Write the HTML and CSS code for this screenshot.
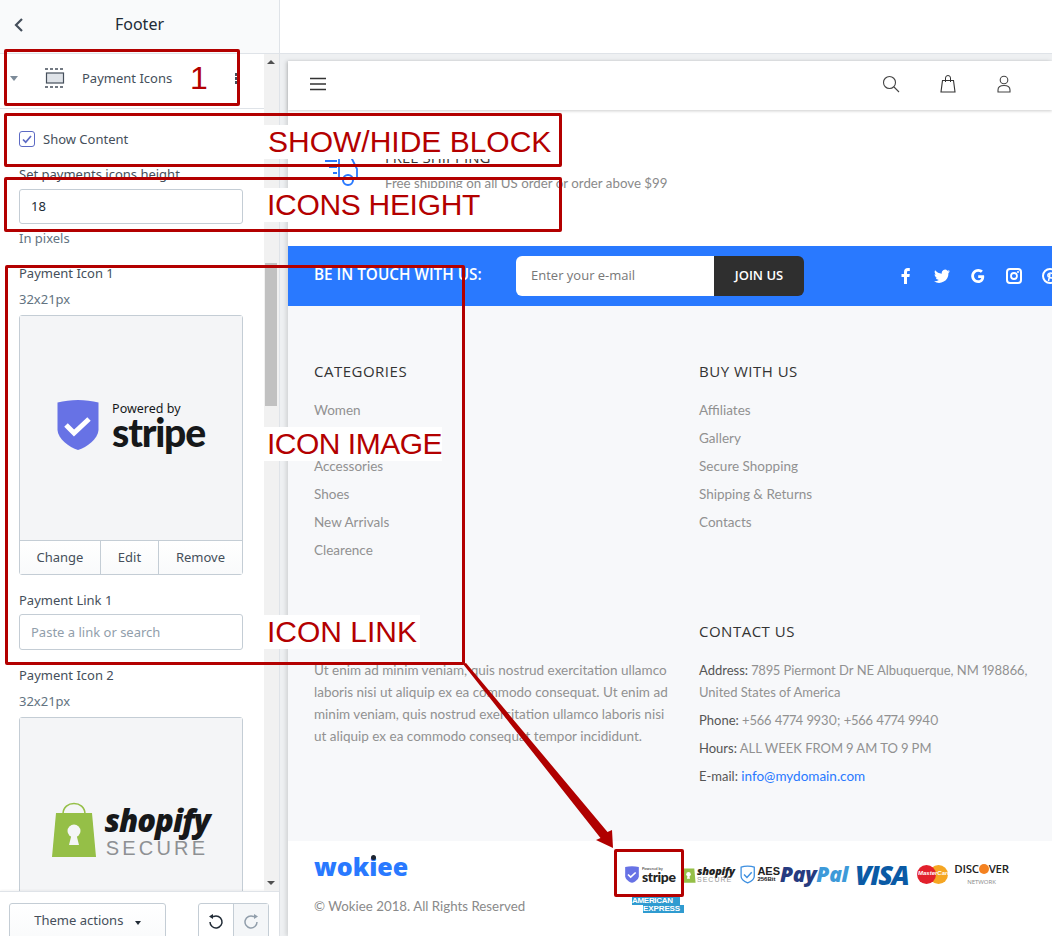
FILE: index.html
```html
<!DOCTYPE html>
<html lang="en">
<head>
    <meta charset="utf-8">
    <title>Footer - Payment Icons</title>
    <link rel="stylesheet" href="styles.css">
</head>
<body>
    <div class="app">
        <aside class="sidebar">
            <div class="side-top">
                <svg class="back" width="10" height="16" viewBox="0 0 10 16"><path d="M8 2L2 8l6 6" fill="none" stroke="#454f5b" stroke-width="2.2"/></svg>
                <span>Footer</span>
            </div>
            <div class="side-body">
                <div class="side-scroll">
                    <div class="block-row">
                        <span class="caret"></span>
                        <svg class="block-icon" width="22" height="22" viewBox="0 0 22 22">
                            <rect x="2.500" y="6" width="17" height="10" fill="#dfe3e8" stroke="#454f5b" stroke-width="1.200"/>
                            <path d="M1 2h20M1 20h20" stroke="#454f5b" stroke-width="1.600" stroke-dasharray="3 2" fill="none"/>
                        </svg>
                        <span class="block-name">Payment Icons</span>
                        <span class="dots"><i></i><i></i><i></i></span>
                    </div>
                    <div class="settings">
                        <label class="check-row">
                            <span class="check"><svg width="12" height="12" viewBox="0 0 12 12"><path d="M2 6.500l2.700 2.700L10 3" fill="none" stroke="#5c6ac4" stroke-width="1.700"/></svg></span>
                            Show Content
                        </label>
                        <div class="label label-height">Set payments icons height</div>
                        <div class="input">18</div>
                        <div class="hint hint-pixels">In pixels</div>
                        <div class="label label-icon">Payment Icon 1</div>
                        <div class="hint hint-size">32x21px</div>
                        <div class="picker">
                            <div class="picker-img stripe-img">
                                <svg width="42" height="50" viewBox="0 0 42 50"><path d="M21 0c7 0 14 1 20.500 2.500V30C41 39 30 47 21 50 12 47 1 39 .5 30V2.500C7 1 14 0 21 0z" fill="#6772e5"/><path d="M9 25l8 8 15-14" fill="none" stroke="#fff" stroke-width="5"/></svg>
                                <div class="stripe-text">
                                    <span class="stripe-small">Powered by</span>
                                    <span class="stripe-big">stripe</span>
                                </div>
                            </div>
                            <div class="picker-btns">
                                <span class="btn-change">Change</span>
                                <span class="btn-edit">Edit</span>
                                <span class="btn-remove">Remove</span>
                            </div>
                        </div>
                        <div class="label label-link">Payment Link 1</div>
                        <div class="input input-empty">Paste a link or search</div>
                        <div class="label label-icon2">Payment Icon 2</div>
                        <div class="hint hint-size">32x21px</div>
                        <div class="picker picker-cut">
                            <div class="picker-img shopify-img">
                                <svg width="44" height="56" viewBox="0 0 44 56"><path d="M11 12C11 -2 33 -2 33 12" fill="none" stroke="#95bf47" stroke-width="1.600"/><path d="M4 11h36l4 44H0z" fill="#95bf47"/><circle cx="22" cy="29" r="6.500" fill="#f4f5f7"/><path d="M20 31h4l3 12H17z" fill="#f4f5f7"/></svg>
                                <div class="shopify-text">
                                    <span class="shopify-big">shopify</span>
                                    <span class="shopify-small">SECURE</span>
                                </div>
                            </div>
                        </div>
                    </div>
                </div>
                <div class="scrollbar">
                    <span class="arrow-up"></span>
                    <span class="thumb"></span>
                    <span class="arrow-down"></span>
                </div>
            </div>
            <div class="side-bottom">
                <div class="theme-btn">Theme actions <span class="caret-small"></span></div>
                <div class="undo-group">
                    <span class="undo"><svg width="18" height="18" viewBox="0 0 18 18"><path d="M5 3.500h1.500A6 6 0 1 1 3 9" fill="none" stroke="#212b36" stroke-width="1.500"/><path d="M2 3.500L6 1v5z" fill="#212b36"/></svg></span>
                    <span class="redo"><svg width="18" height="18" viewBox="0 0 18 18"><path d="M13 3.500h-1.500A6 6 0 1 0 15 9" fill="none" stroke="#919eab" stroke-width="1.500"/><path d="M16 3.500L12 1v5z" fill="#919eab"/></svg></span>
                </div>
            </div>
        </aside>

        <main class="main">
            <div class="main-top"></div>
            <div class="canvas">
                <div class="page">
                    <header class="shop-head">
                        <svg width="18" height="14" viewBox="0 0 18 14"><path d="M1 1.500h16M1 7h16M1 12.500h16" stroke="#333" stroke-width="1.300"/></svg>
                        <div class="shop-icons">
                            <svg width="18" height="18" viewBox="0 0 18 18"><circle cx="7.500" cy="7.500" r="6" fill="none" stroke="#444" stroke-width="1.100"/><path d="M12 12l5 5" stroke="#444" stroke-width="1.100"/></svg>
                            <svg width="16" height="18" viewBox="0 0 16 18"><path d="M2.500 5.500h11l1.500 11.500H1z" fill="none" stroke="#333" stroke-width="1.100"/><path d="M5.500 7V3a2.500 2.500 0 0 1 5 0v4" fill="none" stroke="#333" stroke-width="1"/></svg>
                            <svg width="16" height="18" viewBox="0 0 16 18"><circle cx="8" cy="5" r="3.800" fill="none" stroke="#444" stroke-width="1.100"/><path d="M2 17v-2c0-3 2-4.500 6-4.500s6 1.500 6 4.500v2z" fill="none" stroke="#444" stroke-width="1.100"/></svg>
                        </div>
                    </header>

                    <section class="shipping">
                        <svg class="truck" width="36" height="32" viewBox="0 0 36 32"><path d="M1 6h12M5 12h8M9 18h4" stroke="#2979ff" stroke-width="2"/><path d="M15 2h12l6 12v10h-4M15 2v22h5" fill="none" stroke="#2979ff" stroke-width="1.800"/><circle cx="24" cy="25" r="5" fill="none" stroke="#2979ff" stroke-width="2"/></svg>
                        <div>
                            <div class="ship-title">FREE SHIPPING</div>
                            <div class="ship-text">Free shipping on all US order or order above $99</div>
                        </div>
                    </section>

                    <section class="touch">
                        <div class="touch-title">BE IN TOUCH WITH US:</div>
                        <div class="touch-form">
                            <span class="touch-input">Enter your e-mail</span>
                            <span class="touch-btn">JOIN US</span>
                        </div>
                        <div class="socials">
                            <svg width="16" height="16" viewBox="0 0 16 16"><path d="M6 16V9H3.500V6H6V4c0-2.600 1.500-4 3.800-4h2v3h-1.400C9.400 3 9 3.500 9 4.400V6h2.800l-.4 3H9v7z" fill="#fff"/></svg>
                            <svg width="16" height="16" viewBox="0 0 16 16"><path d="M16 3.200c-.6.300-1.200.4-1.900.5.700-.4 1.200-1 1.400-1.800-.6.400-1.300.6-2.100.8A3.300 3.300 0 0 0 7.800 5.700C5.100 5.600 2.700 4.300 1.100 2.300c-.9 1.500-.4 3.400 1 4.400-.5 0-1-.2-1.500-.4 0 1.600 1.100 3 2.600 3.300-.5.100-1 .1-1.500 0 .4 1.300 1.600 2.300 3.100 2.300A6.600 6.600 0 0 1 0 13.300 9.300 9.300 0 0 0 14.400 5c.6-.5 1.200-1.100 1.600-1.800z" fill="#fff"/></svg>
                            <svg width="16" height="16" viewBox="0 0 16 16"><path d="M14 7.300H8.200v2.600h3.100c-.4 1.500-1.600 2.300-3.100 2.300a4.200 4.200 0 0 1 0-8.400c1 0 2 .4 2.700 1l2-2A7 7 0 1 0 8.200 15c3.700 0 6-2.600 6-6.300 0-.5 0-1-.2-1.400z" fill="#fff"/></svg>
                            <svg width="16" height="16" viewBox="0 0 16 16"><rect x="1" y="1" width="14" height="14" rx="3" fill="none" stroke="#fff" stroke-width="2"/><circle cx="8" cy="8" r="3" fill="none" stroke="#fff" stroke-width="1.800"/><circle cx="12" cy="4" r="1" fill="#fff"/></svg>
                            <svg width="16" height="16" viewBox="0 0 16 16"><circle cx="8" cy="8" r="7" fill="none" stroke="#fff" stroke-width="2"/><path d="M6.500 13L8 6m-1.500 3c-1.500-2 0-4 2-4 2.500 0 3 2 2.500 3.500S8.500 11 8 9" fill="none" stroke="#fff" stroke-width="1.500"/></svg>
                        </div>
                    </section>

                    <section class="links">
                        <div class="col">
                            <h4>CATEGORIES</h4>
                            <ul>
                                <li>Women</li>
                                <li>Men</li>
                                <li>Accessories</li>
                                <li>Shoes</li>
                                <li>New Arrivals</li>
                                <li>Clearence</li>
                            </ul>
                        </div>
                        <div class="col">
                            <h4>BUY WITH US</h4>
                            <ul>
                                <li>Affiliates</li>
                                <li>Gallery</li>
                                <li>Secure Shopping</li>
                                <li>Shipping &amp; Returns</li>
                                <li>Contacts</li>
                            </ul>
                        </div>
                        <div class="col">
                            <h4>ABOUT</h4>
                            <p class="about">Ut enim ad minim veniam, quis nostrud exercitation ullamco laboris nisi ut aliquip ex ea commodo consequat. Ut enim ad minim veniam, quis nostrud exercitation ullamco laboris nisi ut aliquip ex ea commodo consequat tempor incididunt.</p>
                        </div>
                        <div class="col contact">
                            <h4>CONTACT US</h4>
                            <p><b>Address:</b> 7895 Piermont Dr NE Albuquerque, NM 198866, United States of America</p>
                            <p><b>Phone:</b> +566 4774 9930; +566 4774 9940</p>
                            <p><b>Hours:</b> ALL WEEK FROM 9 AM TO 9 PM</p>
                            <p><b>E-mail:</b> <span class="mail">info@mydomain.com</span></p>
                        </div>
                    </section>

                    <footer class="bottom">
                        <div class="brand">
                            <div class="logo">wok<span class="logo-i">i</span>ee</div>
                            <div class="copy">© Wokiee 2018. All Rights Reserved</div>
                        </div>
                        <div class="pay">
                            <span class="pay-stripe">
                                <svg width="14" height="17" viewBox="0 0 42 50"><path d="M21 0c7 0 14 1 20.500 2.500V30C41 39 30 47 21 50 12 47 1 39 .5 30V2.500C7 1 14 0 21 0z" fill="#6772e5"/><path d="M9 25l8 8 15-14" fill="none" stroke="#fff" stroke-width="5"/></svg>
                                <span class="mini-stripe"><small>Powered by</small>stripe</span>
                            </span>
                            <span class="pay-shopify">
                                <svg width="15" height="18" viewBox="0 0 44 56"><path d="M4 11h36l4 44H0z" fill="#95bf47"/><circle cx="22" cy="29" r="7" fill="#fff"/><path d="M20 31h4l3 12H17z" fill="#fff"/></svg>
                                <span class="mini-shopify">shopify<small>SECURE</small></span>
                            </span>
                            <span class="pay-aes">
                                <svg width="16" height="19" viewBox="0 0 42 50"><path d="M21 2c7 0 13 1 18 3v25C39 38 29 45 21 48 13 45 3 38 3 30V5c5-2 11-3 18-3z" fill="none" stroke="#3d8fe0" stroke-width="3.500"/><path d="M11 25l8 8 13-14" fill="none" stroke="#3d8fe0" stroke-width="4"/></svg>
                                <span class="mini-aes">AES<small>256Bit</small></span>
                            </span>
                            <span class="pay-paypal"><b>Pay</b><i>Pal</i></span>
                            <span class="pay-visa">VISA</span>
                            <span class="pay-mc">
                                <svg width="31" height="19" viewBox="0 0 31 19"><circle cx="21.500" cy="9.500" r="9.500" fill="#f5a623"/><circle cx="9.500" cy="9.500" r="9.500" fill="#e2202c"/></svg>
                                <span class="mc-label">MasterCard</span>
                            </span>
                            <span class="pay-discover">DISC<span class="disc-o"></span>VER<small>NETWORK</small></span>
                            <span class="pay-amex"><span class="amex-1">AMERICAN</span><span class="amex-2">EXPRESS</span></span>
                        </div>
                    </footer>
                </div>
            </div>
        </main>
    </div>

    <!-- red notes laid over the screenshot -->
    <div class="note-box box-1"></div>
    <div class="note-box box-2"></div>
    <div class="note-box box-3"></div>
    <div class="note-box box-4"></div>
    <div class="note-box box-5"></div>
    <span class="note note-1">1</span>
    <span class="note note-show">SHOW/HIDE BLOCK</span>
    <span class="note note-height">ICONS HEIGHT</span>
    <span class="note note-image">ICON IMAGE</span>
    <span class="note note-link">ICON LINK</span>
    <svg class="note-arrow" width="160" height="195" viewBox="0 0 160 195">
        <path d="M0 1L3 0 144.500 169 149 167 150 185 133 177 137.500 175z" fill="#b00000"/>
    </svg>
</body>
</html>
```

FILE: styles.css
```css
* {
    box-sizing: border-box;
}

html, body {
    margin: 0;
    height: 936px;
    overflow: hidden;
}

body {
    position: relative;
    font-family: "Noto Sans", sans-serif;
    font-size: 13px;
    color: #454f5b;
    background-color: #fff;
}

.app {
    display: flex;
    width: 1052px;
    height: 936px;
}

/* left panel */
.sidebar {
    width: 280px;
    flex: none;
    display: flex;
    flex-direction: column;
    border-right: 1px solid #dfe3e8;
}

.side-top {
    height: 54px;
    flex: none;
    display: flex;
    align-items: center;
    justify-content: center;
    position: relative;
    padding-bottom: 5px;
    background-color: #f9fafb;
    border-bottom: 1px solid #dfe3e8;
    font-size: 16px;
    color: #212b36;
}

.back {
    position: absolute;
    left: 14px;
    top: 17px;
}

.side-body {
    flex: 1;
    min-height: 0;
    display: flex;
}

.side-scroll {
    flex: 1;
    min-width: 0;
    overflow: hidden;
}

.block-row {
    height: 55px;
    display: flex;
    align-items: center;
    position: relative;
    padding: 0 0 6px 10px;
    border-bottom: 1px solid #dfe3e8;
}

.caret {
    width: 0;
    height: 0;
    border-left: 4px solid transparent;
    border-right: 4px solid transparent;
    border-top: 5px solid #7d8b99;
}

.block-icon {
    margin-left: 26px;
}

.block-name {
    margin-left: 16px;
    font-size: 13px;
}

.dots {
    display: flex;
    flex-direction: column;
    gap: 1px;
    margin-left: 63px;
}

.dots i {
    width: 4px;
    height: 3px;
    background-color: #454f5b;
}

.settings {
    padding: 0 21px 0 19px;
}

.check-row {
    display: flex;
    align-items: center;
    gap: 8px;
    height: 20px;
    margin-top: 20px;
    color: #454f5b;
}

.check {
    width: 16px;
    height: 16px;
    display: flex;
    align-items: center;
    justify-content: center;
    border: 1px solid #5c6ac4;
    border-radius: 3px;
}

.label {
    height: 18px;
    line-height: 18px;
    color: #454f5b;
}

.label-height { margin-top: 16px; }
.label-icon { margin-top: 17px; }
.label-link { margin-top: 16px; }
.label-icon2 { margin-top: 16px; }

.hint {
    height: 18px;
    line-height: 18px;
    color: #637381;
}

.hint-pixels { margin-top: 5px; }
.hint-size { margin-top: 8px; }

.input {
    height: 35px;
    margin-top: 6px;
    padding: 0 11px;
    line-height: 33px;
    background-color: #fff;
    border: 1px solid #c4cdd5;
    border-radius: 3px;
    color: #212b36;
}

.input-empty {
    height: 36px;
    margin-top: 5px;
    line-height: 34px;
    color: #919eab;
}

.picker {
    margin-top: 7px;
    border: 1px solid #c4cdd5;
    border-radius: 3px;
}

.picker-cut {
    height: 200px;
}

.picker-img {
    height: 224px;
    display: flex;
    align-items: center;
    justify-content: center;
    gap: 13px;
    background-color: #f4f5f7;
}

.stripe-img {
    padding-bottom: 6px;
}

.shopify-img {
    gap: 8px;
}

.stripe-text {
    display: flex;
    flex-direction: column;
    color: #16181a;
}

.stripe-small {
    font-size: 12.5px;
    line-height: 14px;
}

.stripe-big {
    font-family: "Lato", sans-serif;
    font-weight: 900;
    font-size: 39px;
    line-height: 32px;
    letter-spacing: -1.2px;
}

.shopify-text {
    display: flex;
    flex-direction: column;
    align-items: center;
}

.shopify-big {
    font-family: "Open Sans", sans-serif;
    font-weight: 800;
    font-style: italic;
    font-size: 31px;
    line-height: 36px;
    letter-spacing: -1px;
    color: #16181a;
}

.shopify-small {
    font-family: "Liberation Sans", sans-serif;
    font-size: 20px;
    line-height: 20px;
    letter-spacing: 3.2px;
    color: #8e9093;
}

.picker-btns {
    display: flex;
    height: 34px;
    line-height: 33px;
    text-align: center;
    background: linear-gradient(#fff, #f9fafb);
    border-top: 1px solid #c4cdd5;
}

.picker-btns span + span {
    border-left: 1px solid #c4cdd5;
}

.btn-change { width: 80px; }
.btn-edit { width: 58px; }
.btn-remove { flex: 1; }

.scrollbar {
    width: 15px;
    flex: none;
    position: relative;
    background-color: #f1f1f1;
}

.arrow-up,
.arrow-down {
    position: absolute;
    left: 3px;
    width: 0;
    height: 0;
    border-left: 4px solid transparent;
    border-right: 4px solid transparent;
}

.arrow-up {
    top: 6px;
    border-bottom: 4px solid #505050;
}

.arrow-down {
    bottom: 6px;
    border-top: 4px solid #505050;
}

.thumb {
    display: block;
    width: 12px;
    height: 143px;
    margin: 209px 0 0 1px;
    background-color: #c1c1c1;
}

.side-bottom {
    height: 45px;
    flex: none;
    display: flex;
    justify-content: space-between;
    padding: 11px 10px 0 9px;
    background-color: #fff;
    border-top: 1px solid #dfe3e8;
    box-shadow: 0 -1px 2px rgba(0, 0, 0, 0.05);
}

.theme-btn {
    width: 157px;
    height: 40px;
    line-height: 33px;
    text-align: center;
    background: linear-gradient(#fff, #f9fafb);
    border: 1px solid #c4cdd5;
    border-radius: 3px;
}

.caret-small {
    display: inline-block;
    width: 0;
    height: 0;
    margin-left: 8px;
    vertical-align: 0;
    border-left: 3px solid transparent;
    border-right: 3px solid transparent;
    border-top: 4px solid #212b36;
}

.undo-group {
    display: flex;
    width: 71px;
    height: 40px;
    border: 1px solid #c4cdd5;
    border-radius: 3px;
}

.undo,
.redo {
    flex: 1;
    display: flex;
    justify-content: center;
    padding-top: 9px;
}

.redo {
    background-color: #f4f6f8;
    border-left: 1px solid #c4cdd5;
}

/* preview */
.main {
    flex: 1;
    min-width: 0;
    display: flex;
    flex-direction: column;
}

.main-top {
    height: 54px;
    flex: none;
    background-color: #fff;
    border-bottom: 1px solid #dfe3e8;
}

.canvas {
    flex: 1;
    min-height: 0;
    overflow: hidden;
    padding: 7px 0 0 8px;
    background-color: #eef0f2;
}

.page {
    width: 764px;
    height: 875px;
    background-color: #fff;
    box-shadow: -2px 0 4px rgba(0, 0, 0, 0.12);
    font-family: "Lato", sans-serif;
}

.shop-head {
    height: 49px;
    display: flex;
    align-items: center;
    justify-content: space-between;
    padding: 0 40px 3px 21px;
    background-color: #fff;
    box-shadow: 0 1px 3px rgba(0, 0, 0, 0.2);
    position: relative;
}

.shop-icons {
    display: flex;
    gap: 40px;
}

.shipping {
    height: 136px;
    display: flex;
    gap: 25px;
    padding: 37px 0 0 36px;
}

.truck {
    margin-top: 8px;
}

.ship-title {
    font-family: "Open Sans", sans-serif;
    font-size: 15px;
    color: #333;
    height: 20px;
}

.ship-text {
    margin-top: 8px;
    font-size: 13.3px;
    color: #8a8a8a;
}

.touch {
    height: 60px;
    display: flex;
    align-items: center;
    padding-left: 26px;
    background-color: #2979ff;
    color: #fff;
}

.touch-title {
    width: 202px;
    flex: none;
    padding-bottom: 4px;
    font-family: "Open Sans", sans-serif;
    font-weight: 600;
    font-size: 15.300px;
    white-space: nowrap;
}

.touch-form {
    display: flex;
    width: 288px;
    height: 40px;
    flex: none;
    border-radius: 6px;
    overflow: hidden;
}

.touch-input {
    flex: 1;
    padding-left: 15px;
    line-height: 39px;
    font-family: "Open Sans", sans-serif;
    font-size: 13px;
    color: #777;
    background-color: #fff;
}

.touch-btn {
    width: 90px;
    line-height: 39px;
    text-align: center;
    font-family: "Open Sans", sans-serif;
    font-weight: 600;
    font-size: 13px;
    background-color: #2f2f2f;
}

.socials {
    display: flex;
    gap: 20px;
    margin-left: 94px;
    flex: none;
}

.links {
    height: 535px;
    display: grid;
    grid-template-columns: 385px 1fr;
    grid-template-rows: 260px 1fr;
    padding: 54px 0 0 26px;
    background-color: #f7f8fa;
    font-size: 13.5px;
    color: #919191;
    font-variant-numeric: proportional-nums;
}

.links h4 {
    margin: 0;
    height: 22px;
    line-height: 22px;
    font-family: "Open Sans", sans-serif;
    font-weight: 400;
    font-size: 15px;
    letter-spacing: .5px;
    color: #333;
}

.links ul {
    list-style: none;
    margin: 14px 0 0;
    padding: 0;
}

.links li {
    height: 28px;
    line-height: 28px;
}

.links p {
    width: 345px;
    margin: 6px 0 0;
    line-height: 22px;
}

.links h4 + p {
    margin-top: 17px;
}

.links b {
    font-weight: 400;
    color: #555;
}

.links .about {
    width: 358px;
}

.contact p {
    font-size: 13px;
}

.mail {
    font-size: 13.5px;
    color: #2979ff;
}

.bottom {
    height: 95px;
    display: flex;
    background-color: #fff;
    padding-left: 26px;
}

.brand {
    width: 311px;
    flex: none;
}

.logo {
    margin-top: 9px;
    height: 32px;
    line-height: 32px;
    font-family: "Open Sans", sans-serif;
    font-weight: 800;
    font-size: 25px;
    color: #2979ff;
}

.logo-i {
    position: relative;
}

.logo-i::after {
    content: "";
    position: absolute;
    left: 1.500px;
    top: 6px;
    width: 5px;
    height: 5px;
    border-radius: 50%;
    background-color: #1c2430;
}

.copy {
    margin-top: 16px;
    font-size: 13.3px;
    color: #8a8a8a;
}

.pay {
    width: 400px;
    padding-top: 20px;
    display: flex;
    flex-wrap: wrap;
    align-items: center;
    align-content: flex-start;
    font-family: "Liberation Sans", sans-serif;
    color: #222;
}

.pay > span {
    display: flex;
    align-items: center;
    height: 26px;
    white-space: nowrap;
}

.pay small {
    display: block;
}

.pay-stripe {
    gap: 3px;
    width: 56px;
}

.mini-stripe {
    font-family: "Lato", sans-serif;
    font-weight: 900;
    font-size: 14px;
    line-height: 12px;
    letter-spacing: -.4px;
}

.mini-stripe small {
    font-size: 4px;
    line-height: 5px;
    font-weight: 400;
    letter-spacing: 0;
}

.pay-shopify {
    gap: 1px;
    width: 59px;
}

.mini-shopify {
    font-family: "Open Sans", sans-serif;
    font-weight: 800;
    font-style: italic;
    font-size: 11px;
    line-height: 11px;
    letter-spacing: -.3px;
}

.mini-shopify small {
    font-family: "Liberation Sans", sans-serif;
    font-size: 7px;
    line-height: 7px;
    font-weight: 400;
    font-style: normal;
    letter-spacing: 1px;
    color: #999;
}

.pay-aes {
    gap: 2px;
    width: 40px;
}

.mini-aes {
    font-family: "Liberation Sans", sans-serif;
    font-weight: 700;
    font-size: 11px;
    line-height: 10px;
}

.mini-aes small {
    font-size: 6px;
    line-height: 7px;
}

.pay-paypal {
    width: 75px;
    font-family: "Open Sans", sans-serif;
    font-size: 21px;
    font-style: italic;
    font-weight: 800;
    letter-spacing: -.3px;
}

.pay-paypal b {
    color: #263b80;
}

.pay-paypal i {
    color: #3d9ad9;
}

.pay-visa {
    width: 62px;
    font-family: "Open Sans", sans-serif;
    font-size: 27px;
    font-weight: 800;
    font-style: italic;
    letter-spacing: -1.5px;
    color: #0a5aa5;
}

.pay-mc {
    width: 35px;
    position: relative;
}

.mc-label {
    position: absolute;
    left: 1px;
    top: 9px;
    font-size: 6px;
    font-weight: 700;
    font-style: italic;
    color: #fff;
}

.pay-discover {
    flex-wrap: wrap;
    justify-content: center;
    width: 59px;
    font-family: "Open Sans", sans-serif;
    font-weight: 600;
    font-size: 11.5px;
    line-height: 12px;
    letter-spacing: -.3px;
}

.disc-o {
    width: 10px;
    height: 10px;
    border-radius: 50%;
    background-color: #f48120;
}

.pay-discover small {
    width: 100%;
    text-align: center;
    font-size: 6px;
    line-height: 8px;
    font-weight: 400;
    letter-spacing: 0;
    color: #888;
}

.pay .pay-amex {
    display: block;
    width: 54px;
    height: auto;
    margin: 10px 0 0 7px;
    font-family: "Liberation Sans", sans-serif;
    font-weight: 700;
    font-size: 8px;
    line-height: 8px;
    color: #fff;
}

.amex-1,
.amex-2 {
    display: block;
    height: 8px;
    background-color: #2f9bd0;
}

.amex-1 {
    width: 48px;
    letter-spacing: -.3px;
}

.amex-2 {
    width: 41px;
    margin-left: 11px;
    letter-spacing: -.1px;
}

/* annotations */
.note-box {
    position: absolute;
    border: 3px solid #b30000;
    border-radius: 2px;
}

.box-1 { left: 4px; top: 49px; width: 236px; height: 57px; }
.box-2 { left: 4px; top: 113px; width: 558px; height: 54px; }
.box-3 { left: 4px; top: 177px; width: 558px; height: 55px; }
.box-4 { left: 5px; top: 265px; width: 460px; height: 400px; }
.box-5 { left: 614px; top: 849px; width: 70px; height: 48px; }

.note {
    position: absolute;
    font-family: "Liberation Sans", sans-serif;
    font-size: 30px;
    line-height: 34px;
    color: #b30000;
    background-color: #fff;
    white-space: nowrap;
}

.note-1 { left: 190px; top: 61px; background: none; font-size: 32px; }
.note-show { left: 264px; top: 125px; padding: 0 6px 0 4px; }
.note-height { left: 264px; top: 188px; padding: 0 4px 0 3px; letter-spacing: -.3px; }
.note-image { left: 264px; top: 427px; padding-left: 3px; letter-spacing: -.5px; }
.note-link { left: 264px; top: 615px; padding: 0 3px; }

.note-arrow {
    position: absolute;
    left: 463px;
    top: 663px;
}
```
